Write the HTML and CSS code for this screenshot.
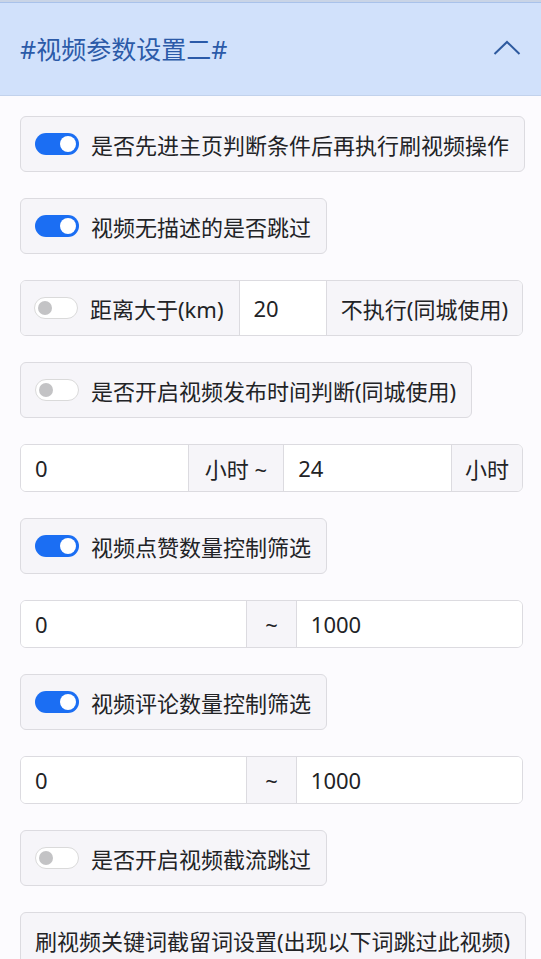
FILE: index.html
```html
<!DOCTYPE html>
<html lang="zh-CN">
<head>
<meta charset="utf-8">
<link rel="stylesheet" href="styles.css">
</head>
<body>
<div class="topbar"></div>
<div class="header">
  <span class="title">#视频参数设置二#</span>
  <svg class="chev" width="28" height="16" viewBox="0 0 28 16"><path d="M1.5 14 L14 2 L26.5 14" fill="none" stroke="#2e5a9f" stroke-width="2"/></svg>
</div>
<div class="content">
  <div class="box"><span class="switch on"><i></i></span><span>是否先进主页判断条件后再执行刷视频操作</span></div>
  <div class="box"><span class="switch on"><i></i></span><span>视频无描述的是否跳过</span></div>
  <div class="group tall">
    <div class="addon first"><span class="switch off"><i></i></span><span>距离大于(km)</span></div>
    <div class="input">20</div>
    <div class="addon">不执行(同城使用)</div>
  </div>
  <div class="box"><span class="switch off"><i></i></span><span>是否开启视频发布时间判断(同城使用)</span></div>
  <div class="group">
    <div class="input">0</div>
    <div class="addon mid">小时 ~</div>
    <div class="input">24</div>
    <div class="addon end">小时</div>
  </div>
  <div class="box"><span class="switch on"><i></i></span><span>视频点赞数量控制筛选</span></div>
  <div class="group">
    <div class="input">0</div>
    <div class="addon tilde">~</div>
    <div class="input">1000</div>
  </div>
  <div class="box"><span class="switch on"><i></i></span><span>视频评论数量控制筛选</span></div>
  <div class="group">
    <div class="input">0</div>
    <div class="addon tilde">~</div>
    <div class="input">1000</div>
  </div>
  <div class="box"><span class="switch off"><i></i></span><span>是否开启视频截流跳过</span></div>
  <div class="box plain">刷视频关键词截留词设置(出现以下词跳过此视频)</div>
</div>
</body>
</html>
```
FILE: styles.css
```css
html, body {
  margin: 0;
  padding: 0;
  background: #fcfbfe;
  font-family: "Noto Sans", "Noto Sans CJK SC", sans-serif;
  color: #222326;
}
.topbar {
  height: 2px;
  background: #c9d4e6;
  border-bottom: 1px solid #a9c2ea;
}
.header {
  height: 92px;
  background: #d1e1fb;
  border-bottom: 1px solid #c2d2ec;
  display: flex;
  align-items: center;
  justify-content: space-between;
  padding: 0 20px 0 20px;
}
.title {
  font-size: 25px;
  color: #2b5aa8;
  line-height: 1;
}
.chev {
  display: block;
  margin-top: -2px;
}
.content {
  padding: 20px 18px 0 20px;
  display: flex;
  flex-direction: column;
  align-items: flex-start;
  gap: 26px;
}
.box {
  height: 56px;
  box-sizing: border-box;
  display: inline-flex;
  align-items: center;
  gap: 12px;
  padding: 0 15px 0 14px;
  background: #f6f5f9;
  border: 1px solid #dcdbe0;
  border-radius: 6px;
  font-size: 22px;
  white-space: nowrap;
}
.box.plain {
  padding-left: 14px;
}
.switch {
  position: relative;
  display: inline-block;
  width: 44px;
  height: 22px;
  box-sizing: border-box;
  border-radius: 11px;
  flex: none;
}
.switch i {
  position: absolute;
  top: 50%;
  border-radius: 50%;
}
.switch.on {
  background: #1b6ef3;
}
.switch.on i {
  width: 16px;
  height: 16px;
  right: 3px;
  margin-top: -8px;
  background: #fff;
}
.switch.off {
  background: #fff;
  border: 1px solid #dadada;
}
.switch.off i {
  width: 14px;
  height: 14px;
  left: 3px;
  margin-top: -7px;
  background: #c3c3c5;
}
.group {
  align-self: stretch;
  height: 48px;
  box-sizing: border-box;
  display: flex;
  border: 1px solid #dcdbe0;
  border-radius: 6px;
  overflow: hidden;
  font-size: 22px;
  background: #fff;
}
.group.tall {
  height: 56px;
}
.input {
  flex: 1 1 0;
  min-width: 0;
  display: flex;
  align-items: center;
  padding: 0 14px;
  background: #fff;
}
.addon {
  flex: none;
  display: flex;
  align-items: center;
  gap: 12px;
  padding: 0 14px;
  background: #f6f5f9;
  white-space: nowrap;
}
.input + .addon, .addon + .input {
  border-left: 1px solid #dcdbe0;
}
.addon.first {
  padding: 0 15px 0 13px;
}
.addon.mid {
  padding: 0 16px;
}
.addon.end {
  padding: 0 13px;
}
.addon.tilde {
  padding: 0 18px;
}
```
